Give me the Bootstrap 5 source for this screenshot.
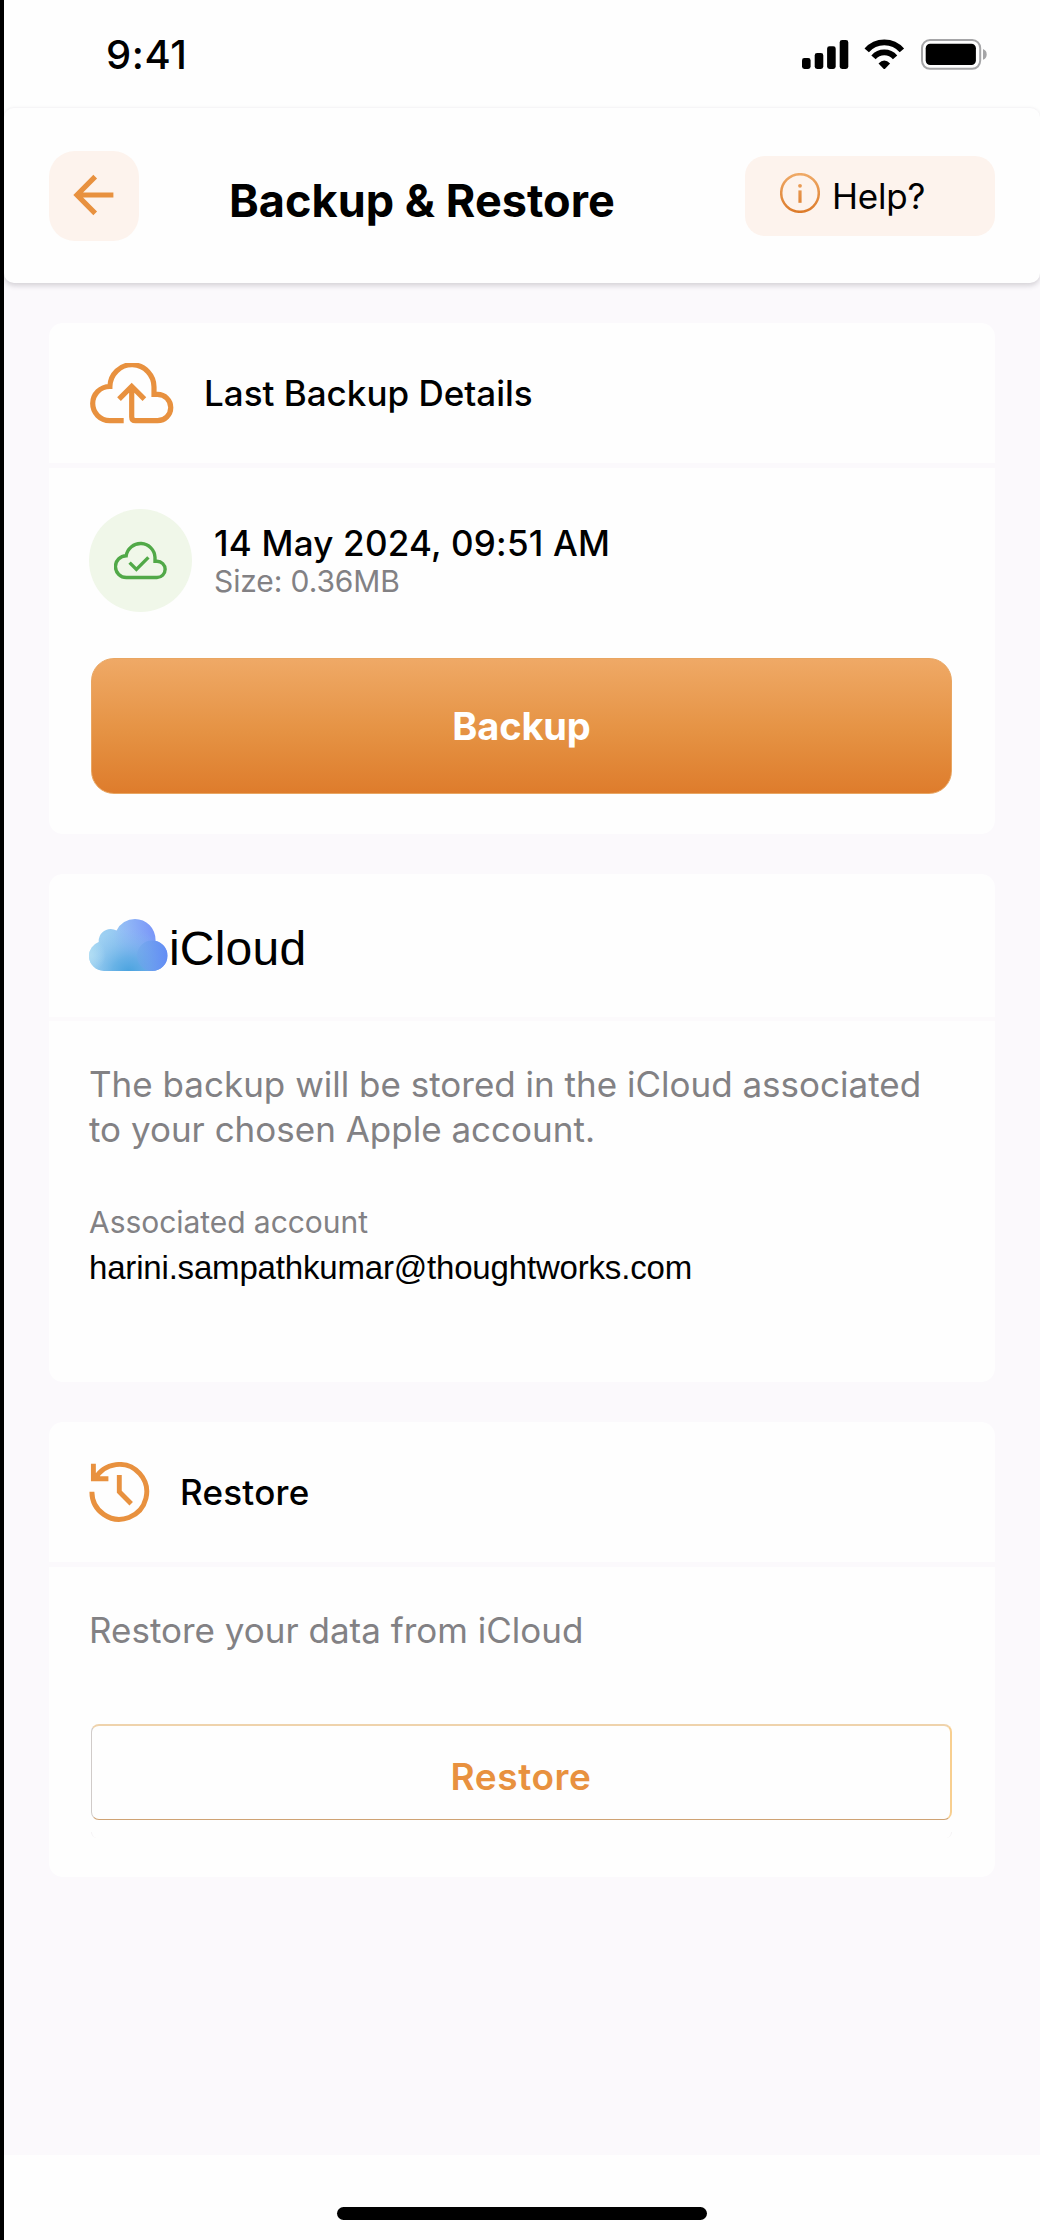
<!DOCTYPE html>
<html lang="en">
<head>
<meta charset="utf-8">
<meta name="viewport" content="width=device-width, initial-scale=1">
<title>Backup &amp; Restore</title>
<link href="https://cdn.jsdelivr.net/npm/bootstrap@5.3.0/dist/css/bootstrap.min.css" rel="stylesheet">
<style>
:root{--accent:#e8913f;--page:#fbf9fc;--panel:#fefefe;--muted:#828184}
html,body{height:2240px}
body{font-family:Inter,"Liberation Sans",sans-serif;color:#000;background:var(--page);border-left:4px solid #000;overflow:hidden}
svg{display:block;flex:none}
.status-bar{height:107px;background:var(--panel);padding:0 53px 0 102px}
.clock{font-size:40px;font-weight:500;letter-spacing:.6px;line-height:48px;padding-top:2px}
.status-icons{padding-top:1px}
.header-wrap{background:linear-gradient(var(--panel) 50%,var(--page) 50%)}
.app-header{height:176px;background:var(--panel);border-top:1px solid #f6f5f7;border-radius:10px;padding:0 45px;box-shadow:0 3px 5px rgba(40,35,50,.17)}
.back-btn{width:90px;height:90px;border-radius:26px;background:#fdf3ed}
.page-title{font-size:45px;font-weight:700;line-height:54px;letter-spacing:.05px;margin:0 0 0 90px;padding-top:10px}
.help-btn{width:250px;height:80px;border-radius:20px;background:#fdf3ed;padding:0 35px;gap:12px}
.help-btn svg{margin-top:-6px}
.help-btn span{font-size:35px;line-height:44px;letter-spacing:-.2px;padding-top:1px}
.content{height:1872px;padding:40px 45px 0;gap:40px}
.panel{background:var(--panel);border:0;border-radius:14px}
.panel-head{background:transparent;height:145px;border-bottom:5px solid var(--page);padding:0 40px}
.panel-main{padding:41px 40px 0}
.panel-title{font-size:35px;font-weight:500;line-height:44px;margin:0 0 0 30px}
.p-restore .panel-title{letter-spacing:.25px;padding-bottom:1px}
.p-backup{height:511px}.p-cloud{height:508px}.p-restore{height:455px}
.status-dot{width:103px;height:103px;background:#f0f7e9}
.stamp-box{margin-left:22px}
.stamp{font-size:35px;font-weight:500;letter-spacing:.22px;line-height:42px}
.size-note{font-size:30px;line-height:36px;color:var(--muted);letter-spacing:-.1px;margin-top:-1px}
.btn-main{height:136px;margin:46px 3px 0 2px;border:1px solid #e9a662;border-radius:23px;background:linear-gradient(#efa966,#e59243 55%,#de7c2c);color:#fff;font-size:38px;font-weight:700;letter-spacing:-.15px}
.body-copy{font-size:35px;line-height:45px;color:var(--muted);margin:0}
.label-copy{font-size:30px;line-height:40px;color:var(--muted);letter-spacing:-.05px;margin-top:50px}
.mail-copy{font-family:"Liberation Sans",Arial,sans-serif;font-size:33px;line-height:46px;letter-spacing:-.18px;margin-top:3px}
.cloud-name{font-family:"Liberation Sans",Arial,sans-serif;font-size:48px;line-height:56px;letter-spacing:.2px;padding-top:7px;margin-left:1px}
.p-cloud .panel-head{height:147px;border-bottom:4px solid #fcfafc}
.btn-line{height:96px;margin:71px 3px 0 2px;padding:8px 0 0;border:1px solid;border-width:2px 2px 1px 1px;border-color:#efd3ac #f8cf90 #cfa374 #d0cbc9;border-radius:8px;color:var(--accent);font-size:37px;font-weight:600;letter-spacing:.6px}
.btn-rim{height:6px;margin:12px 3px 0 2px;border:solid #f4f2f4;border-width:0 1px;border-radius:0 0 8px 8px}
.home-area{height:85px;background:var(--panel)}
.home-bar{width:370px;height:13px;border-radius:7px;background:#000;margin:52px 0 0 333px}
</style>
</head>
<body class="m-0">
<div class="status-bar d-flex align-items-center justify-content-between">
  <span class="clock">9:41</span>
  <div class="status-icons d-flex align-items-center">
    <svg width="186" height="32" viewBox="801 38 186 32">
      <g><rect x="802" y="58" width="8.6" height="11" rx="2.4"/><rect x="814.7" y="53" width="8.6" height="16" rx="2.4"/><rect x="827.1" y="46.3" width="8.6" height="22.7" rx="2.4"/><rect x="839.7" y="40" width="8.6" height="29" rx="2.4"/></g>
      <g transform="translate(864.7 39.3)"><g fill="none" stroke="#000" stroke-width="5.8"><path d="M2 11.1A23.3 23.3 0 0 1 37.2 11.1"/><path d="M8.8 18A14.4 14.4 0 0 1 30.4 18"/></g><path d="M13.8 24.2Q19.6 18.2 25.4 24.2L20.6 29.2Q19.6 30.2 18.6 29.2Z"/></g>
      <rect x="922" y="40" width="58.2" height="28.8" rx="8" fill="none" stroke="#a5a5a7" stroke-width="2"/>
      <rect x="925.7" y="43.7" width="50.2" height="21.3" rx="4.5"/>
      <path d="M983 49q3.7 1.5 3.7 5.4t-3.7 5.4z" fill="#a5a5a7"/>
    </svg>
  </div>
</div>
<div class="header-wrap">
<header class="app-header d-flex align-items-center">
  <a href="#" class="back-btn" aria-label="Back"><svg width="90" height="90" fill="none" stroke="#e8913f" stroke-width="5.2"><path d="M46.2 25.7L28 44L46.2 62.3M29 44H64.4"/></svg></a>
  <h1 class="page-title">Backup &amp; Restore</h1>
  <a href="#" class="help-btn d-flex align-items-center ms-auto text-decoration-none text-black">
    <svg width="40" height="40" viewBox="0 0 40 40"><defs><linearGradient id="gi" gradientUnits="userSpaceOnUse" x1="0" y1="0" x2="0" y2="40"><stop stop-color="#efaa68"/><stop offset="1" stop-color="#dc7a29"/></linearGradient></defs><circle cx="20" cy="20" r="18.8" fill="none" stroke="url(#gi)" stroke-width="2.5"/><circle cx="20" cy="12.8" r="1.9" fill="url(#gi)"/><rect x="18.4" y="17.4" width="3.2" height="12.4" fill="url(#gi)"/></svg>
    <span>Help?</span>
  </a>
</header>
</div>

<main class="content d-flex flex-column">
  <section class="card panel p-backup">
    <div class="card-header panel-head d-flex align-items-center">
      <svg width="85" height="61" fill="none" stroke="#e8913f" stroke-width="5.2"><path d="M34.7 57.7H20.7A17.1 17.1 0 0 1 20.9 23.5A22 22.3 0 0 1 65 24.7V31.4H68.6A13.15 13.15 0 0 1 68.6 57.7H46.5Q42.7 57.7 42.7 54V23.4M30 36.1L42.7 23.4L55.4 36.1"/></svg>
      <h2 class="panel-title">Last Backup Details</h2>
    </div>
    <div class="card-body panel-main">
      <div class="d-flex align-items-center">
        <div class="status-dot rounded-circle d-flex align-items-center justify-content-center"><svg width="53" height="39" fill="none" stroke="#51a948" stroke-width="3.4"><path d="M12.5 36.5A10.9 10.9 0 0 1 12.2 14.7A14.5 14.5 0 0 1 41 16.4V20.2H43A8.15 8.15 0 0 1 43 36.5ZM15.6 21.6L22.4 28.4L34.4 16.4"/></svg></div>
        <div class="stamp-box"><div class="stamp">14 May 2024, 09:51 AM</div><div class="size-note">Size: 0.36MB</div></div>
      </div>
      <div class="d-grid"><button class="btn btn-main">Backup</button></div>
    </div>
  </section>

  <section class="card panel p-cloud">
    <div class="card-header panel-head d-flex align-items-center">
      <svg width="79" height="54" viewBox="0 0 79 54">
        <defs>
          <clipPath id="cl"><circle cx="15" cy="37" r="15"/><circle cx="21.7" cy="22" r="12"/><circle cx="46" cy="20.5" r="20.5"/><circle cx="63.2" cy="36.7" r="15.3"/><rect x="15" y="24" width="48" height="28"/></clipPath>
          <linearGradient id="g1" x1="0" y1="0.3" x2="1" y2="0.2"><stop stop-color="#a4d6f2"/><stop offset=".3" stop-color="#98cbf2"/><stop offset=".5" stop-color="#90b7f6"/><stop offset=".8" stop-color="#7b98f8"/><stop offset="1" stop-color="#6b95f7"/></linearGradient>
          <radialGradient id="g2" cx=".5" cy=".5" r=".5"><stop stop-color="#47a2de"/><stop offset=".35" stop-color="#58aae2" stop-opacity=".75"/><stop offset=".7" stop-color="#72b4e8" stop-opacity=".35"/><stop offset="1" stop-color="#7fb8ee" stop-opacity="0"/></radialGradient>
          <radialGradient id="g3" cx=".5" cy=".5" r=".5"><stop stop-color="#b4dff4" stop-opacity=".9"/><stop offset="1" stop-color="#b0dcf4" stop-opacity="0"/></radialGradient>
          <linearGradient id="g4"><stop stop-color="#6fa8ea" stop-opacity=".5"/><stop offset="1" stop-color="#628cf5"/></linearGradient>
        </defs>
        <g clip-path="url(#cl)"><rect width="79" height="54" fill="url(#g1)"/><ellipse cx="40" cy="54" rx="48" ry="44" fill="url(#g2)"/><circle cx="0" cy="36" r="17" fill="url(#g3)"/><circle cx="63.2" cy="36.7" r="15.3" fill="url(#g4)"/></g>
      </svg>
      <span class="cloud-name">iCloud</span>
    </div>
    <div class="card-body panel-main">
      <p class="body-copy">The backup will be stored in the iCloud associated<br>to your chosen Apple account.</p>
      <div class="label-copy">Associated account</div>
      <div class="mail-copy">harini.sampathkumar@thoughtworks.com</div>
    </div>
  </section>

  <section class="card panel p-restore">
    <div class="card-header panel-head d-flex align-items-center">
      <svg width="61" height="60" fill="none" stroke="#e8913f" stroke-width="4.9"><path d="M2.9 29.8A27.4 27.4 0 1 0 6 17.2M4.4 1.7V16.7H19.4M30.3 13V29.8L42.2 41.7"/></svg>
      <h2 class="panel-title">Restore</h2>
    </div>
    <div class="card-body panel-main">
      <p class="body-copy">Restore your data from iCloud</p>
      <div class="d-grid"><button class="btn btn-line">Restore</button></div>
      <div class="btn-rim"></div>
    </div>
  </section>
</main>
<footer class="home-area overflow-hidden"><div class="home-bar"></div></footer>
<script src="https://cdn.jsdelivr.net/npm/bootstrap@5.3.0/dist/js/bootstrap.bundle.min.js"></script>
</body>
</html>
